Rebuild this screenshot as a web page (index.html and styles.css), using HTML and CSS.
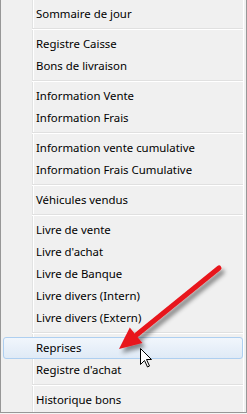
FILE: index.html
```html
<!DOCTYPE html>
<html>
<head>
<meta charset="utf-8">
<link rel="stylesheet" href="styles.css">
</head>
<body>
<div class="menu">
  <div class="item">Sommaire de jour</div>
  <div class="sep"></div>
  <div class="item">Registre Caisse</div>
  <div class="item">Bons de livraison</div>
  <div class="sep"></div>
  <div class="item">Information Vente</div>
  <div class="item">Information Frais</div>
  <div class="sep"></div>
  <div class="item">Information vente cumulative</div>
  <div class="item">Information Frais Cumulative</div>
  <div class="sep"></div>
  <div class="item">Véhicules vendus</div>
  <div class="sep"></div>
  <div class="item">Livre de vente</div>
  <div class="item">Livre d'achat</div>
  <div class="item">Livre de Banque</div>
  <div class="item">Livre divers (Intern)</div>
  <div class="item">Livre divers (Extern)</div>
  <div class="sep"></div>
  <div class="item hover">Reprises</div>
  <div class="item">Registre d'achat</div>
  <div class="sep"></div>
  <div class="item">Historique bons</div>
</div>
<svg class="overlay" width="247" height="414" viewBox="0 0 247 414">
  <defs>
    <filter id="sh" x="-20%" y="-20%" width="150%" height="150%">
      <feDropShadow dx="3" dy="4" stdDeviation="2" flood-color="#000" flood-opacity="0.45"/>
    </filter>
  </defs>
  <g filter="url(#sh)">
    <line x1="219" y1="268" x2="137" y2="334.5" stroke="#e8161c" stroke-width="5" stroke-linecap="round"/>
    <polygon points="119,349 129.8,327.4 142.4,343" fill="#e8161c"/>
  </g>
  <polygon class="cursor" points="140.5,348.5 140.5,364.5 144.5,360.5 147.5,367 149.5,366 146.5,359.5 151.5,359.5" fill="#fff" stroke="#000" stroke-width="1" stroke-linejoin="miter"/>
</svg>
</body>
</html>
```

FILE: styles.css
```css
html, body {
  margin: 0;
  padding: 0;
  background: #f4f4f4;
}

body {
  width: 247px;
  height: 414px;
  position: relative;
  overflow: hidden;
}

.menu {
  box-sizing: border-box;
  width: 247px;
  padding: 3px 3px 1px 2px;
  border-left: 1px solid #979797;
  border-right: 1px solid #979797;
  border-bottom: 1px solid #979797;
  background-color: #f0f0f0;
  background-image: linear-gradient(to right,
    transparent 31px, #e2e3e3 31px, #e2e3e3 32px,
    #ffffff 32px, #ffffff 33px, transparent 33px);
  box-shadow: inset -2px 0 0 #f0f0f0, inset -3px 0 0 #ffffff;
  display: flex;
  flex-direction: column;
  font-family: "Noto Sans", "Open Sans", "DejaVu Sans", sans-serif;
  font-size: 11.4px;
  color: #000;
}

.item {
  box-sizing: border-box;
  height: 22px;
  padding-left: 32px;
  white-space: nowrap;
  border: 1px solid transparent;
  border-radius: 3px;
  line-height: 20px;
}

.item.hover {
  border-color: #aecff0;
  background: linear-gradient(#f1f6fc, #dfeaf6);
}

.sep {
  height: 8px;
  box-sizing: border-box;
  margin-left: 29px;
  background-image: linear-gradient(to bottom,
    transparent 3px, #e0e0e0 3px, #e0e0e0 4px,
    #ffffff 4px, #ffffff 5px, transparent 5px);
}

.overlay {
  position: absolute;
  left: 0;
  top: 0;
  pointer-events: none;
}
```
